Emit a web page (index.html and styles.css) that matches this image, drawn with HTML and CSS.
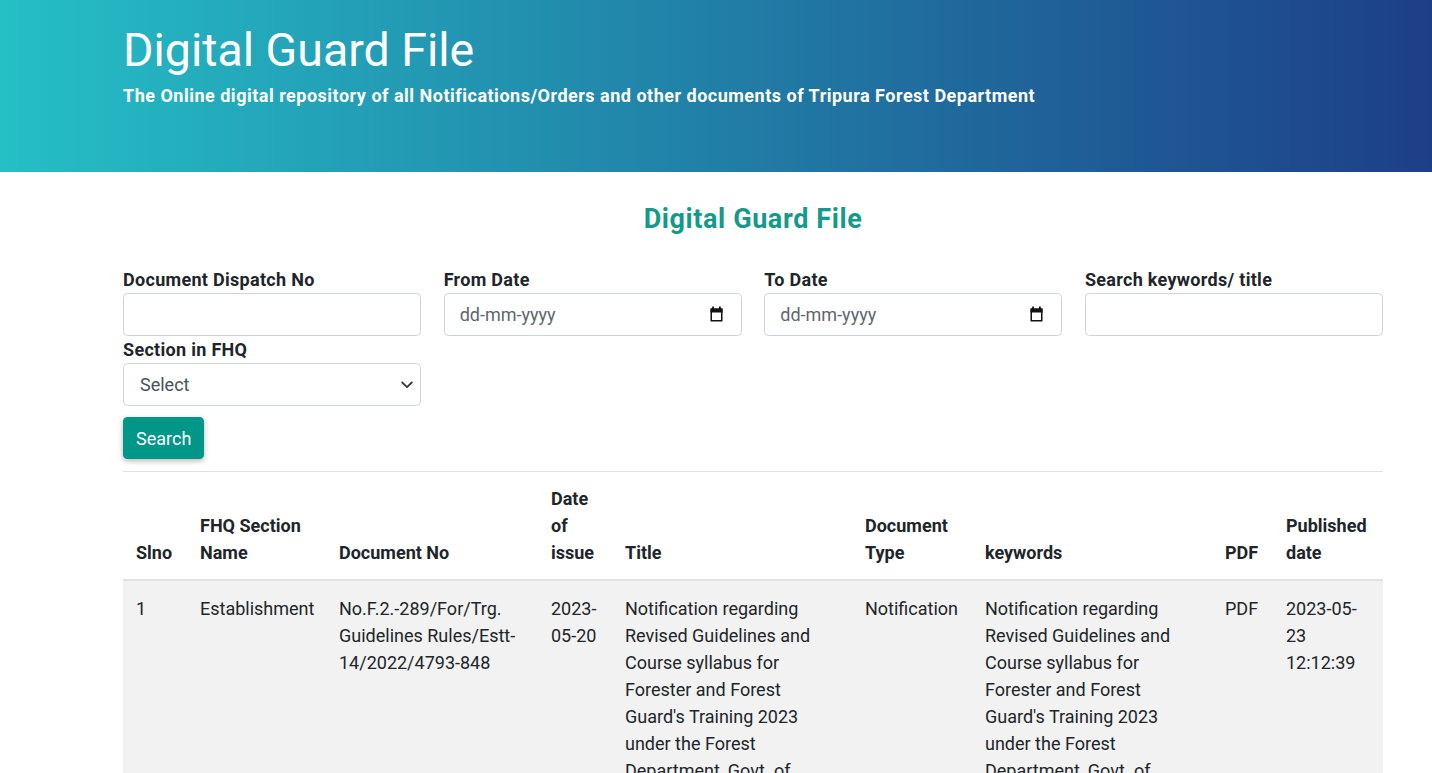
FILE: index.html
```html
<!DOCTYPE html>
<html lang="en">
<head>
<meta charset="utf-8">
<title>Digital Guard File</title>
<link rel="stylesheet" href="styles.css">
</head>
<body>
<header class="hero">
  <h1 class="hero-title">Digital Guard File</h1>
  <p class="hero-sub">The Online digital repository of all Notifications/Orders and other documents of Tripura Forest Department</p>
</header>

<main class="main">
  <h3 class="page-title">Digital Guard File</h3>

  <form class="filters">
    <div class="field">
      <label class="field-label">Document Dispatch No</label>
      <input class="input" type="text">
    </div>
    <div class="field">
      <label class="field-label">From Date</label>
      <div class="control-wrap">
        <input class="input input-date" type="text" placeholder="dd-mm-yyyy">
        <svg class="cal-icon" width="13" height="16" viewBox="0 0 13 16" aria-hidden="true">
          <rect x="2.2" y="0.5" width="1.8" height="3" fill="#111"/>
          <rect x="9" y="0.5" width="1.8" height="3" fill="#111"/>
          <rect x="0.5" y="2.5" width="12" height="4" fill="#111"/>
          <rect x="1.25" y="3.25" width="10.5" height="11.5" fill="none" stroke="#111" stroke-width="1.5"/>
        </svg>
      </div>
    </div>
    <div class="field">
      <label class="field-label">To Date</label>
      <div class="control-wrap">
        <input class="input input-date" type="text" placeholder="dd-mm-yyyy">
        <svg class="cal-icon" width="13" height="16" viewBox="0 0 13 16" aria-hidden="true">
          <rect x="2.2" y="0.5" width="1.8" height="3" fill="#111"/>
          <rect x="9" y="0.5" width="1.8" height="3" fill="#111"/>
          <rect x="0.5" y="2.5" width="12" height="4" fill="#111"/>
          <rect x="1.25" y="3.25" width="10.5" height="11.5" fill="none" stroke="#111" stroke-width="1.5"/>
        </svg>
      </div>
    </div>
    <div class="field">
      <label class="field-label">Search keywords/ title</label>
      <input class="input" type="text">
    </div>
    <div class="field">
      <label class="field-label">Section in FHQ</label>
      <div class="control-wrap">
        <select class="input select">
          <option>Select</option>
        </select>
        <svg class="chevron" width="12" height="8" viewBox="0 0 12 8" aria-hidden="true">
          <path d="M1.2 1.5 L6 6.2 L10.8 1.5" fill="none" stroke="#343a40" stroke-width="1.8" stroke-linecap="round" stroke-linejoin="round"/>
        </svg>
      </div>
    </div>
    <div class="actions">
      <button class="btn-search" type="button">Search</button>
    </div>
  </form>

  <hr class="divider">

  <table class="doc-table">
    <colgroup>
      <col class="c-slno">
      <col class="c-section">
      <col class="c-docno">
      <col class="c-date">
      <col class="c-title">
      <col class="c-type">
      <col class="c-keywords">
      <col class="c-pdf">
      <col class="c-published">
    </colgroup>
    <thead>
      <tr>
        <th>Slno</th>
        <th>FHQ Section Name</th>
        <th>Document No</th>
        <th>Date of issue</th>
        <th>Title</th>
        <th>Document Type</th>
        <th>keywords</th>
        <th>PDF</th>
        <th>Published date</th>
      </tr>
    </thead>
    <tbody>
      <tr>
        <td>1</td>
        <td>Establishment</td>
        <td>No.F.2.-289/For/Trg. Guidelines Rules/Estt-14/2022/4793-848</td>
        <td>2023-05-20</td>
        <td>Notification regarding Revised Guidelines and Course syllabus for Forester and Forest Guard's Training 2023 under the Forest Department, Govt. of Tripura</td>
        <td>Notification</td>
        <td>Notification regarding Revised Guidelines and Course syllabus for Forester and Forest Guard's Training 2023 under the Forest Department, Govt. of Tripura</td>
        <td>PDF</td>
        <td>2023-05-23 12:12:39</td>
      </tr>
    </tbody>
  </table>
</main>
</body>
</html>
```

FILE: styles.css
```css
* {
  box-sizing: border-box;
}

html {
  font-size: 18px;
}

body {
  margin: 0;
  font-family: Roboto, "Liberation Sans", Arial, sans-serif;
  font-size: 18px;
  line-height: 1.5;
  color: #212529;
  background: #fff;
}

.hero {
  height: 172px;
  padding: 23px 49px 0 123px;
  background: linear-gradient(to right, #25bfc6 0%, #1d3f88 100%);
  color: #fff;
}

.hero-title {
  margin: 0;
  font-size: 46.5px;
  font-weight: 400;
  line-height: 54px;
}

.hero-sub {
  margin: 5px 0 0;
  font-size: 18px;
  font-weight: 700;
  line-height: 27px;
  letter-spacing: 0.5px;
}

.main {
  padding: 0 49px 0 123px;
}

.page-title {
  margin: 31px 0 31px;
  text-align: center;
  color: #139a8b;
  font-size: 27px;
  font-weight: 700;
  line-height: 32px;
  letter-spacing: 0.6px;
}

.filters {
  display: grid;
  grid-template-columns: repeat(4, 1fr);
  column-gap: 22.6px;
  row-gap: 0;
}

.field-label {
  display: block;
  font-weight: 700;
  line-height: 27px;
  letter-spacing: 0.3px;
}

.control-wrap {
  position: relative;
}

.input {
  display: block;
  width: 100%;
  height: 43px;
  margin: 0;
  padding: 0 15px;
  font-family: inherit;
  font-size: 18px;
  color: #495057;
  background: #fff;
  border: 1px solid #ced4da;
  border-radius: 4.5px;
  outline: none;
}

.input::placeholder {
  color: #5f666d;
  opacity: 1;
}

.select {
  padding-left: 16px;
  appearance: none;
  -webkit-appearance: none;
}

.cal-icon {
  position: absolute;
  right: 19px;
  top: 13px;
}

.chevron {
  position: absolute;
  right: 8px;
  top: 18px;
  pointer-events: none;
}

.actions {
  grid-column: 1 / -1;
  padding-top: 11px;
}

.btn-search {
  display: inline-block;
  margin: 0;
  padding: 7.5px 13px;
  font-family: inherit;
  font-size: 18px;
  line-height: 27px;
  color: #fff;
  background: #009688;
  border: 0;
  border-radius: 4.5px;
  box-shadow: 0 2px 5px rgba(0, 0, 0, 0.22), 0 2px 8px rgba(0, 0, 0, 0.08);
  cursor: pointer;
}

.divider {
  margin: 12px 0 0;
  border: 0;
  border-top: 1px solid #dee2e6;
}

.doc-table {
  width: 100%;
  border-collapse: collapse;
  table-layout: fixed;
}

.c-slno { width: 64px; }
.c-section { width: 139px; }
.c-docno { width: 212px; }
.c-date { width: 74px; }
.c-title { width: 240px; }
.c-type { width: 120px; }
.c-keywords { width: 240px; }
.c-pdf { width: 61px; }
.c-published { width: 110px; }

.doc-table th {
  padding: 12.5px 13px 13.5px;
  text-align: left;
  vertical-align: bottom;
  font-weight: 700;
  line-height: 27px;
  border-bottom: 2px solid #dee2e6;
}

.doc-table td {
  padding: 13.5px 13px;
  vertical-align: top;
  line-height: 27px;
  background: #f2f2f2;
}
```
